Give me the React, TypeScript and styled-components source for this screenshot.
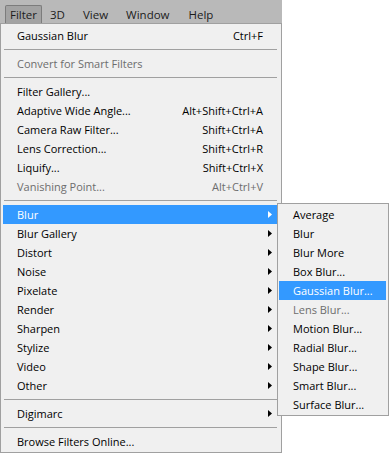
import React from "react";
import styled, { createGlobalStyle } from "styled-components";

const Global = createGlobalStyle`
  html, body { margin: 0; padding: 0; background: #ffffff; }
  body { font-family: "Open Sans", "Liberation Sans", sans-serif; font-size: 11px; }
`;

const Page = styled.div`
  position: relative;
  width: 390px;
  height: 454px;
  overflow: hidden;
  background: #ffffff;
`;

const MenuBar = styled.div`
  display: flex;
  align-items: flex-end;
  width: 282px;
  height: 23px;
  box-sizing: border-box;
  padding-left: 5px;
  background: #b9b9b9;
`;

const BarItem = styled.div<{ $active?: boolean; $gap: number }>`
  height: 18px;
  box-sizing: border-box;
  margin-right: ${(p) => p.$gap}px;
  padding: 0 4px;
  line-height: 17px;
  font-size: 11.5px;
  color: #1c1c1c;
  border: 1px solid ${(p) => (p.$active ? "#7c7c7c" : "transparent")};
  border-bottom: none;
  border-radius: 2px 2px 0 0;
  background: ${(p) => (p.$active ? "#a3a3a3" : "transparent")};
`;

const Panel = styled.div`
  width: 282px;
  box-sizing: border-box;
  border: 1px solid #a0a0a0;
  background: #f0f0f0;
  padding: 2px 1px 1px 2px;
`;

const SubPanel = styled.div`
  position: absolute;
  left: 277px;
  top: 203px;
  width: 112px;
  box-sizing: border-box;
  border: 1px solid #a0a0a0;
  background: #f0f0f0;
  padding: 1px 2px 1px 1px;
`;

const Row = styled.div<{ $hl?: boolean; $disabled?: boolean }>`
  display: flex;
  align-items: center;
  height: 19px;
  line-height: 19px;
  padding-left: 14px;
  white-space: nowrap;
  background: ${(p) => (p.$hl ? "#3399ff" : "transparent")};
  color: ${(p) => (p.$hl ? "#ffffff" : p.$disabled ? "#6d6d6d" : "#000000")};
`;

const Label = styled.span`
  flex: 1;
`;

const Shortcut = styled.span`
  padding-right: 17px;
`;

const ArrowCell = styled.span`
  display: flex;
  align-items: center;
  width: 17px;
  height: 19px;
  padding-left: 5px;
  box-sizing: border-box;
`;

const Separator = styled.div`
  height: 1px;
  margin: 4px 3px 4px 1px;
  background: #a0a0a0;
`;

type Item =
  | { sep: true }
  | {
      sep?: false;
      label: string;
      shortcut?: string;
      arrow?: boolean;
      disabled?: boolean;
      hl?: boolean;
    };

const mainItems: Item[] = [
  { label: "Gaussian Blur", shortcut: "Ctrl+F" },
  { sep: true },
  { label: "Convert for Smart Filters", disabled: true },
  { sep: true },
  { label: "Filter Gallery..." },
  { label: "Adaptive Wide Angle...", shortcut: "Alt+Shift+Ctrl+A" },
  { label: "Camera Raw Filter...", shortcut: "Shift+Ctrl+A" },
  { label: "Lens Correction...", shortcut: "Shift+Ctrl+R" },
  { label: "Liquify...", shortcut: "Shift+Ctrl+X" },
  { label: "Vanishing Point...", shortcut: "Alt+Ctrl+V", disabled: true },
  { sep: true },
  { label: "Blur", arrow: true, hl: true },
  { label: "Blur Gallery", arrow: true },
  { label: "Distort", arrow: true },
  { label: "Noise", arrow: true },
  { label: "Pixelate", arrow: true },
  { label: "Render", arrow: true },
  { label: "Sharpen", arrow: true },
  { label: "Stylize", arrow: true },
  { label: "Video", arrow: true },
  { label: "Other", arrow: true },
  { sep: true },
  { label: "Digimarc", arrow: true },
  { sep: true },
  { label: "Browse Filters Online..." },
];

const subItems: Item[] = [
  { label: "Average" },
  { label: "Blur" },
  { label: "Blur More" },
  { label: "Box Blur..." },
  { label: "Gaussian Blur...", hl: true },
  { label: "Lens Blur...", disabled: true },
  { label: "Motion Blur..." },
  { label: "Radial Blur..." },
  { label: "Shape Blur..." },
  { label: "Smart Blur..." },
  { label: "Surface Blur..." },
];

const Arrow = ({ color }: { color: string }) => (
  <svg width="4" height="7" viewBox="0 0 4 7">
    <polygon points="0,0 4,3.5 0,7" fill={color} />
  </svg>
);

const renderItems = (items: Item[]) =>
  items.map((it, i) =>
    it.sep ? (
      <Separator key={i} />
    ) : (
      <Row key={i} $hl={it.hl} $disabled={it.disabled}>
        <Label>{it.label}</Label>
        {it.shortcut && <Shortcut>{it.shortcut}</Shortcut>}
        {it.arrow && (
          <ArrowCell>
            <Arrow color={it.hl ? "#ffffff" : "#000000"} />
          </ArrowCell>
        )}
      </Row>
    )
  );

export default function App() {
  return (
    <Page>
      <Global />
      <MenuBar>
        <BarItem $active $gap={3}>Filter</BarItem>
        <BarItem $gap={8}>3D</BarItem>
        <BarItem $gap={8}>View</BarItem>
        <BarItem $gap={9}>Window</BarItem>
        <BarItem $gap={0}>Help</BarItem>
      </MenuBar>
      <Panel>{renderItems(mainItems)}</Panel>
      <SubPanel>{renderItems(subItems)}</SubPanel>
    </Page>
  );
}
